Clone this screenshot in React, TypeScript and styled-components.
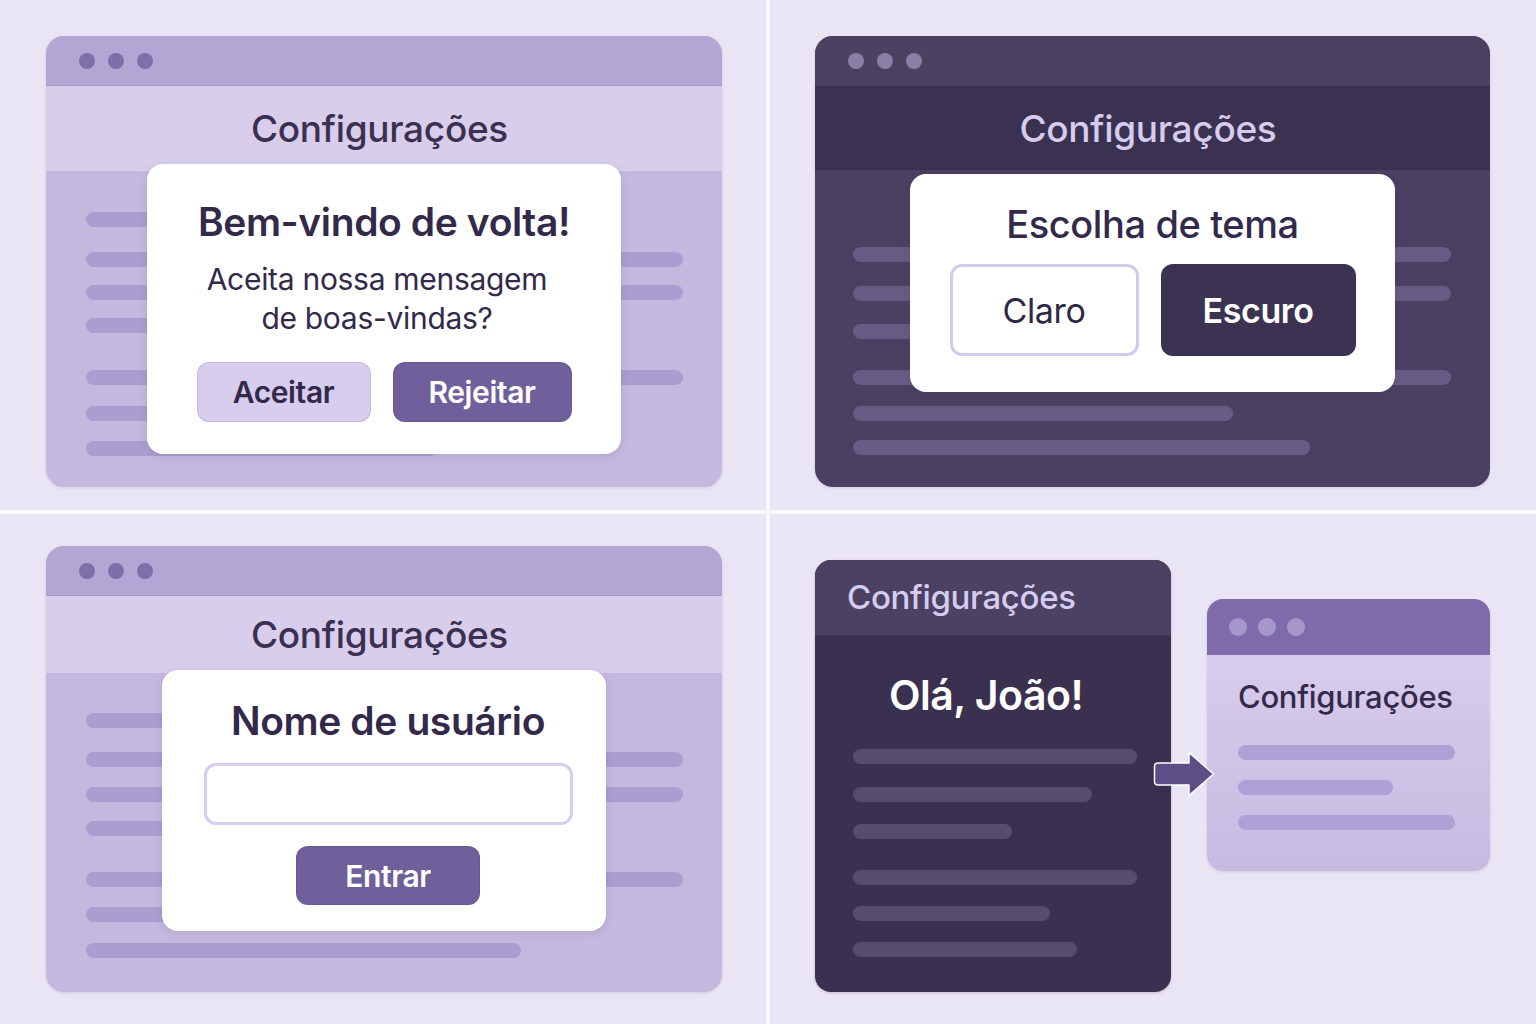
import React from 'react';
import styled, { createGlobalStyle } from 'styled-components';

type Tone = 'light' | 'dark';

const palette = {
  light: {
    bar: '#b2a6d4',
    head: '#d8ceec',
    body: '#c5b8df',
    line: '#ab9dd0',
    dot: '#7f6fa8',
    title: '#3b3052',
  },
  dark: {
    bar: '#4b4262',
    head: '#3a3250',
    body: '#4a4162',
    line: '#675c83',
    dot: '#8a80a6',
    title: '#d6ccef',
  },
};

const GlobalStyle = createGlobalStyle`
  html, body {
    margin: 0;
    padding: 0;
    background: #f9f8fd;
  }
  body {
    font-family: Inter, "Noto Sans", sans-serif;
    -webkit-font-smoothing: antialiased;
  }
`;

const Board = styled.div`
  width: 1536px;
  height: 1024px;
  display: grid;
  grid-template-columns: 766px 766px;
  grid-template-rows: 510px 510px;
  gap: 4px;
  background: #f9f8fd;
`;

const Cell = styled.div<{ $pad: string }>`
  position: relative;
  display: flex;
  align-items: flex-start;
  padding: ${(p) => p.$pad};
  background: #eae5f4;
`;

const Window = styled.div<{ $tone: Tone; $w: number; $h: number }>`
  position: relative;
  width: ${(p) => p.$w}px;
  height: ${(p) => p.$h}px;
  display: flex;
  flex-direction: column;
  border-radius: 18px;
  overflow: hidden;
  background: ${(p) => palette[p.$tone].body};
  box-shadow: 0 1px 3px rgba(60, 40, 100, 0.12);
`;

const TitleBar = styled.div<{ $tone: Tone }>`
  height: 50px;
  flex-shrink: 0;
  display: flex;
  align-items: center;
  gap: 13px;
  padding-left: 33px;
  background: ${(p) => palette[p.$tone].bar};
  border-bottom: 1px solid rgba(40, 20, 80, 0.08);
  box-sizing: border-box;
`;

const Dot = styled.span<{ $color: string; $size?: number }>`
  width: ${(p) => p.$size ?? 16}px;
  height: ${(p) => p.$size ?? 16}px;
  border-radius: 50%;
  background: ${(p) => p.$color};
`;

const Header = styled.div<{ $tone: Tone; $h: number }>`
  height: ${(p) => p.$h}px;
  flex-shrink: 0;
  display: flex;
  align-items: center;
  justify-content: center;
  padding-right: 9px;
  background: ${(p) => palette[p.$tone].head};
`;

const HeaderTitle = styled.h1<{ $tone: Tone }>`
  margin: 0;
  font-size: 37px;
  font-weight: 500;
  letter-spacing: -0.3px;
  color: ${(p) => palette[p.$tone].title};
`;

const Body = styled.div<{ $left?: number }>`
  flex: 1;
  display: flex;
  flex-direction: column;
  align-items: flex-start;
  padding: 0 0 0 ${(p) => p.$left ?? 40}px;
`;

const Bar = styled.div<{ $w: number; $mt: number; $color: string }>`
  width: ${(p) => p.$w}px;
  height: 15px;
  flex-shrink: 0;
  margin-top: ${(p) => p.$mt}px;
  border-radius: 8px;
  background: ${(p) => p.$color};
`;

const Dialog = styled.div<{ $x: number; $y: number; $w: number; $pad: string }>`
  position: absolute;
  left: ${(p) => p.$x}px;
  top: ${(p) => p.$y}px;
  width: ${(p) => p.$w}px;
  box-sizing: border-box;
  padding: ${(p) => p.$pad};
  display: flex;
  flex-direction: column;
  align-items: center;
  background: #ffffff;
  border-radius: 16px;
  box-shadow: 0 2px 8px rgba(50, 30, 90, 0.12);
`;

const DialogTitle = styled.h2<{ $size: number; $weight: number }>`
  margin: 0;
  font-size: ${(p) => p.$size}px;
  line-height: ${(p) => p.$size + 8}px;
  font-weight: ${(p) => p.$weight};
  letter-spacing: -0.4px;
  color: #33294a;
  white-space: nowrap;
`;

const Message = styled.p`
  margin: 15px 14px 0 0;
  font-size: 30px;
  line-height: 39px;
  font-weight: 400;
  letter-spacing: -0.3px;
  text-align: center;
  color: #33294a;
`;

const ButtonRow = styled.div<{ $mt: number }>`
  display: flex;
  gap: 22px;
  margin-top: ${(p) => p.$mt}px;
`;

const Button = styled.button<{
  $w: number;
  $h: number;
  $bg: string;
  $fg: string;
  $size: number;
  $weight: number;
  $border?: string;
  $mt?: number;
}>`
  width: ${(p) => p.$w}px;
  height: ${(p) => p.$h}px;
  margin-top: ${(p) => p.$mt ?? 0}px;
  box-sizing: border-box;
  border: ${(p) => p.$border ?? '1px solid rgba(40, 20, 80, 0.1)'};
  border-radius: 12px;
  background: ${(p) => p.$bg};
  color: ${(p) => p.$fg};
  font-family: Inter, "Noto Sans", sans-serif;
  font-size: ${(p) => p.$size}px;
  font-weight: ${(p) => p.$weight};
  letter-spacing: -0.4px;
  cursor: pointer;
`;

const TextField = styled.input`
  width: 369px;
  height: 62px;
  margin-top: 19px;
  box-sizing: border-box;
  border: 3px solid #d8cdee;
  border-radius: 12px;
  background: #fff;
  outline: none;
`;

/* bottom-right: two cards and an arrow */

const DarkCard = styled.div`
  width: 356px;
  height: 432px;
  flex-shrink: 0;
  display: flex;
  flex-direction: column;
  border-radius: 16px;
  overflow: hidden;
  background: #3a3150;
  box-shadow: 0 1px 3px rgba(40, 20, 80, 0.2);
`;

const DarkHead = styled.div`
  height: 75px;
  flex-shrink: 0;
  display: flex;
  align-items: center;
  padding-left: 32px;
  background: #4b4263;
  border-bottom: 1px solid rgba(20, 10, 40, 0.2);
`;

const CardTitle = styled.h3<{ $color: string; $size: number }>`
  margin: 0;
  font-size: ${(p) => p.$size}px;
  line-height: ${(p) => p.$size + 8}px;
  font-weight: 500;
  letter-spacing: -0.3px;
  color: ${(p) => p.$color};
  white-space: nowrap;
`;

const DarkBody = styled.div`
  flex: 1;
  display: flex;
  flex-direction: column;
  align-items: flex-start;
  padding: 0 38px;
`;

const Greeting = styled.h2`
  align-self: center;
  margin: 34px 14px 0 0;
  font-size: 41px;
  line-height: 50px;
  font-weight: 600;
  letter-spacing: -0.5px;
  color: #ffffff;
`;

const LightCard = styled.div`
  width: 283px;
  height: 272px;
  flex-shrink: 0;
  margin: 39px 0 0 36px;
  display: flex;
  flex-direction: column;
  border-radius: 16px;
  overflow: hidden;
  background: linear-gradient(180deg, #dbd1ef 0%, #c7bae1 100%);
  box-shadow: 0 1px 3px rgba(60, 40, 100, 0.12);
`;

const LightBar = styled.div`
  height: 56px;
  flex-shrink: 0;
  display: flex;
  align-items: center;
  gap: 11px;
  padding-left: 22px;
  background: #7e6caa;
`;

const LightBody = styled.div`
  flex: 1;
  display: flex;
  flex-direction: column;
  align-items: flex-start;
  padding: 22px 31px 0;
`;

const Arrow = styled.svg`
  position: absolute;
  left: 383px;
  top: 237px;
`;

type Line = { w: number; mt: number };

const Dots = ({ color }: { color: string }) => (
  <>
    <Dot $color={color} />
    <Dot $color={color} />
    <Dot $color={color} />
  </>
);

const Lines = ({ items, color }: { items: Line[]; color: string }) => (
  <>
    {items.map((l, i) => (
      <Bar key={i} $w={l.w} $mt={l.mt} $color={color} />
    ))}
  </>
);

const welcomeLines: Line[] = [
  { w: 430, mt: 41 },
  { w: 597, mt: 25 },
  { w: 597, mt: 18 },
  { w: 430, mt: 18 },
  { w: 597, mt: 37 },
  { w: 430, mt: 21 },
  { w: 351, mt: 20 },
];

const themeLines: Line[] = [
  { w: 598, mt: 77 },
  { w: 598, mt: 24 },
  { w: 400, mt: 23 },
  { w: 598, mt: 31 },
  { w: 380, mt: 21 },
  { w: 457, mt: 19 },
];

const loginLines: Line[] = [
  { w: 430, mt: 40 },
  { w: 597, mt: 24 },
  { w: 597, mt: 20 },
  { w: 430, mt: 19 },
  { w: 597, mt: 36 },
  { w: 430, mt: 20 },
  { w: 435, mt: 21 },
];

const darkLines: Line[] = [
  { w: 284, mt: 29 },
  { w: 239, mt: 23 },
  { w: 159, mt: 22 },
  { w: 284, mt: 31 },
  { w: 197, mt: 21 },
  { w: 224, mt: 21 },
];

const lightLines: Line[] = [
  { w: 217, mt: 29 },
  { w: 155, mt: 20 },
  { w: 217, mt: 20 },
];

export default function App() {
  return (
    <>
      <GlobalStyle />
      <Board>
        <Cell $pad="36px 0 0 46px">
          <Window $tone="light" $w={676} $h={451}>
            <TitleBar $tone="light">
              <Dots color={palette.light.dot} />
            </TitleBar>
            <Header $tone="light" $h={85}>
              <HeaderTitle $tone="light">Configurações</HeaderTitle>
            </Header>
            <Body>
              <Lines items={welcomeLines} color={palette.light.line} />
            </Body>
            <Dialog $x={101} $y={128} $w={474} $pad="34px 0 32px">
              <DialogTitle $size={39} $weight={600}>
                Bem-vindo de volta!
              </DialogTitle>
              <Message>
                Aceita nossa mensagem
                <br />
                de boas-vindas?
              </Message>
              <ButtonRow $mt={24}>
                <Button $w={174} $h={60} $bg="#d7cdec" $fg="#33294a" $size={30} $weight={600}>
                  Aceitar
                </Button>
                <Button $w={179} $h={60} $bg="#6f5f9a" $fg="#ffffff" $size={30} $weight={600}>
                  Rejeitar
                </Button>
              </ButtonRow>
            </Dialog>
          </Window>
        </Cell>

        <Cell $pad="36px 0 0 45px">
          <Window $tone="dark" $w={675} $h={451}>
            <TitleBar $tone="dark">
              <Dots color={palette.dark.dot} />
            </TitleBar>
            <Header $tone="dark" $h={84}>
              <HeaderTitle $tone="dark">Configurações</HeaderTitle>
            </Header>
            <Body $left={38}>
              <Lines items={themeLines} color={palette.dark.line} />
            </Body>
            <Dialog $x={95} $y={138} $w={485} $pad="27px 0 36px">
              <DialogTitle $size={38} $weight={500}>
                Escolha de tema
              </DialogTitle>
              <ButtonRow $mt={17}>
                <Button
                  $w={189}
                  $h={92}
                  $bg="#ffffff"
                  $fg="#2f2745"
                  $size={34}
                  $weight={400}
                  $border="3px solid #d3c9ec"
                >
                  Claro
                </Button>
                <Button $w={195} $h={92} $bg="#3c3352" $fg="#ffffff" $size={34} $weight={600}>
                  Escuro
                </Button>
              </ButtonRow>
            </Dialog>
          </Window>
        </Cell>

        <Cell $pad="32px 0 0 46px">
          <Window $tone="light" $w={676} $h={446}>
            <TitleBar $tone="light">
              <Dots color={palette.light.dot} />
            </TitleBar>
            <Header $tone="light" $h={77}>
              <HeaderTitle $tone="light">Configurações</HeaderTitle>
            </Header>
            <Body>
              <Lines items={loginLines} color={palette.light.line} />
            </Body>
            <Dialog $x={116} $y={124} $w={444} $pad="27px 0 26px 8px">
              <DialogTitle $size={39} $weight={600}>
                Nome de usuário
              </DialogTitle>
              <TextField aria-label="Nome de usuário" />
              <Button $w={184} $h={59} $mt={21} $bg="#6f5f9a" $fg="#ffffff" $size={30} $weight={600}>
                Entrar
              </Button>
            </Dialog>
          </Window>
        </Cell>

        <Cell $pad="46px 0 0 45px">
          <DarkCard>
            <DarkHead>
              <CardTitle $color="#d6ccef" $size={33}>
                Configurações
              </CardTitle>
            </DarkHead>
            <DarkBody>
              <Greeting>Olá, João!</Greeting>
              <Lines items={darkLines} color="#574c70" />
            </DarkBody>
          </DarkCard>
          <LightCard>
            <LightBar>
              <Dot $color="#a596cc" $size={18} />
              <Dot $color="#a596cc" $size={18} />
              <Dot $color="#a596cc" $size={18} />
            </LightBar>
            <LightBody>
              <CardTitle $color="#33294a" $size={31}>
                Configurações
              </CardTitle>
              <Lines items={lightLines} color="#ae9fd5" />
            </LightBody>
          </LightCard>
          <Arrow width="62" height="47" viewBox="0 0 62 47">
            <path
              d="M5 12 H36 V1.5 L60.5 23 L36 44.5 V34 H5 Q1.5 34 1.5 30.5 V15.5 Q1.5 12 5 12 Z"
              fill="#5d4e86"
              stroke="#ffffff"
              strokeWidth="1.5"
              strokeLinejoin="round"
            />
          </Arrow>
        </Cell>
      </Board>
    </>
  );
}
